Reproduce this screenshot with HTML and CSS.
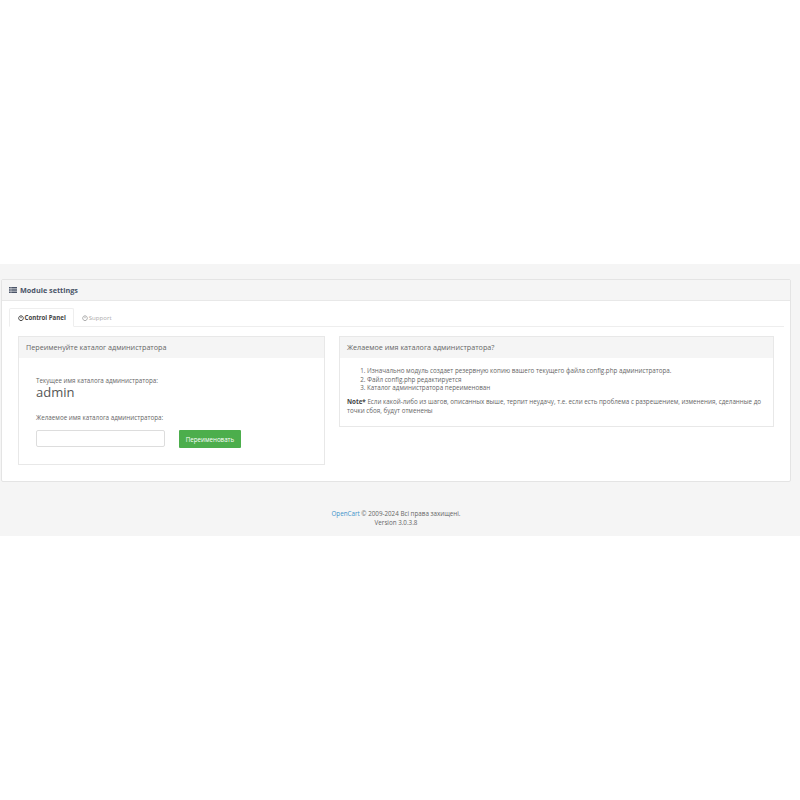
FILE: index.html
```html
<!DOCTYPE html>
<html lang="ru">
<head>
<meta charset="utf-8">
<title>Module settings</title>
<link rel="stylesheet" href="styles.css">
</head>
<body>
<div class="page">
  <section class="panel">
    <header class="panel-head">
      <svg class="icon-list" viewBox="0 0 8 6" width="8" height="6"><path d="M0 0h1.8v1.6H0zM2.2 0H8v1.6H2.2zM0 2.2h1.8v1.6H0zM2.2 2.2H8v1.6H2.2zM0 4.4h1.8V6H0zM2.2 4.4H8V6H2.2z"/></svg>
      <h1>Module settings</h1>
    </header>
    <div class="panel-body">
      <nav class="tabs">
        <a class="tab active"><svg class="icon-power" viewBox="0 0 10 10" width="6" height="6"><path d="M3 1.8A4 4 0 1 0 7 1.8M5 .3v4.4"/></svg>Control Panel</a>
        <a class="tab"><svg class="icon-power" viewBox="0 0 10 10" width="6" height="6"><path d="M3 1.8A4 4 0 1 0 7 1.8M5 .3v4.4"/></svg>Support</a>
      </nav>
      <div class="columns">
        <article class="card">
          <h2 class="card-head">Переименуйте каталог администратора</h2>
          <div class="card-body rename">
            <p class="label">Текущее имя каталога администратора:</p>
            <p class="current">admin</p>
            <p class="label desired">Желаемое имя каталога администратора:</p>
            <div class="rename-row">
              <input class="field" type="text">
              <button class="btn" type="button">Переименовать</button>
            </div>
          </div>
        </article>
        <article class="card info">
          <h2 class="card-head">Желаемое имя каталога администратора?</h2>
          <div class="card-body notes">
            <ol>
              <li>Изначально модуль создает резервную копию вашего текущего файла config.php администратора.</li>
              <li>Файл config.php редактируется</li>
              <li>Каталог администратора переименован</li>
            </ol>
            <p><b>Note*</b> Если какой-либо из шагов, описанных выше, терпит неудачу, т.е. если есть проблема с разрешением, изменения, сделанные до точки сбоя, будут отменены</p>
          </div>
        </article>
      </div>
    </div>
  </section>
  <footer class="foot">
    <p><a>OpenCart</a> © 2009-2024 Всі права захищені.</p>
    <p>Version 3.0.3.8</p>
  </footer>
</div>
</body>
</html>
```
FILE: styles.css
```css
* { box-sizing: border-box; }
html, body { margin: 0; background: #fff; }
body { font-family: "Open Sans", sans-serif; font-size: 6.25px; line-height: 9px; color: #666; }
p, h1, h2, ol { margin: 0; padding: 0; }
.page { margin-top: 264px; height: 272px; background: #f5f5f5; padding: 15px 9px 0 1px; }
.panel { height: 203px; background: #fff; border: 1px solid #e4e4e4; border-radius: 2px; }
.panel-head { height: 21px; display: flex; align-items: center; gap: 3px; padding-left: 7px; background: #f5f5f5; border-bottom: 1px solid #e8e8e8; }
.icon-list { fill: #4a5468; }
.panel-head h1 { font-size: 7.25px; font-weight: 700; color: #4a5468; }
.panel-body { padding: 7px 6px 0 7px; }
.tabs { display: flex; height: 19px; border-bottom: 1px solid #eee; }
.tab { display: flex; align-items: center; gap: 1px; height: 19px; padding: 0 7.5px; font-size: 6.1px; color: #aaa; }
.tab.active { font-weight: 700; color: #444; background: #fff; border: 1px solid #eee; border-bottom-color: #fff; border-radius: 2px 2px 0 0; }
.icon-power { fill: none; stroke: currentColor; stroke-width: 1.6; stroke-linecap: round; }
.columns { display: flex; gap: 14px; align-items: flex-start; padding: 9px 10px 0 9px; }
.card { flex: 0 0 307px; background: #fff; border: 1px solid #e8e8e8; }
.card.info { flex: 1 1 0; }
.card-head { height: 21px; display: flex; align-items: center; padding-left: 7px; background: #f5f5f5; font-size: 7.2px; font-weight: 400; color: #666; }
.rename { height: 106px; padding: 18px 17px 0; }
.current { font-size: 13px; line-height: 14px; color: #555; }
.desired { margin-top: 14px; }
.rename-row { display: flex; align-items: flex-start; gap: 14px; margin-top: 8px; }
.field { width: 129px; height: 17px; border: 1px solid #ddd; border-radius: 2px; background: #fff; }
.btn { width: 62px; height: 18px; padding: 0; border: 0; border-radius: 1px; background: #4cae4c; color: #fff; font: 400 6.2px "Open Sans", sans-serif; }
.notes { height: 68px; padding: 9px 7px 0; }
.notes ol { padding-left: 20px; line-height: 8.5px; }
.notes p { margin-top: 4.5px; }
.notes b { color: #444; }
.foot { margin-top: 27px; text-align: center; }
.foot a { color: #3c92ca; }
```
